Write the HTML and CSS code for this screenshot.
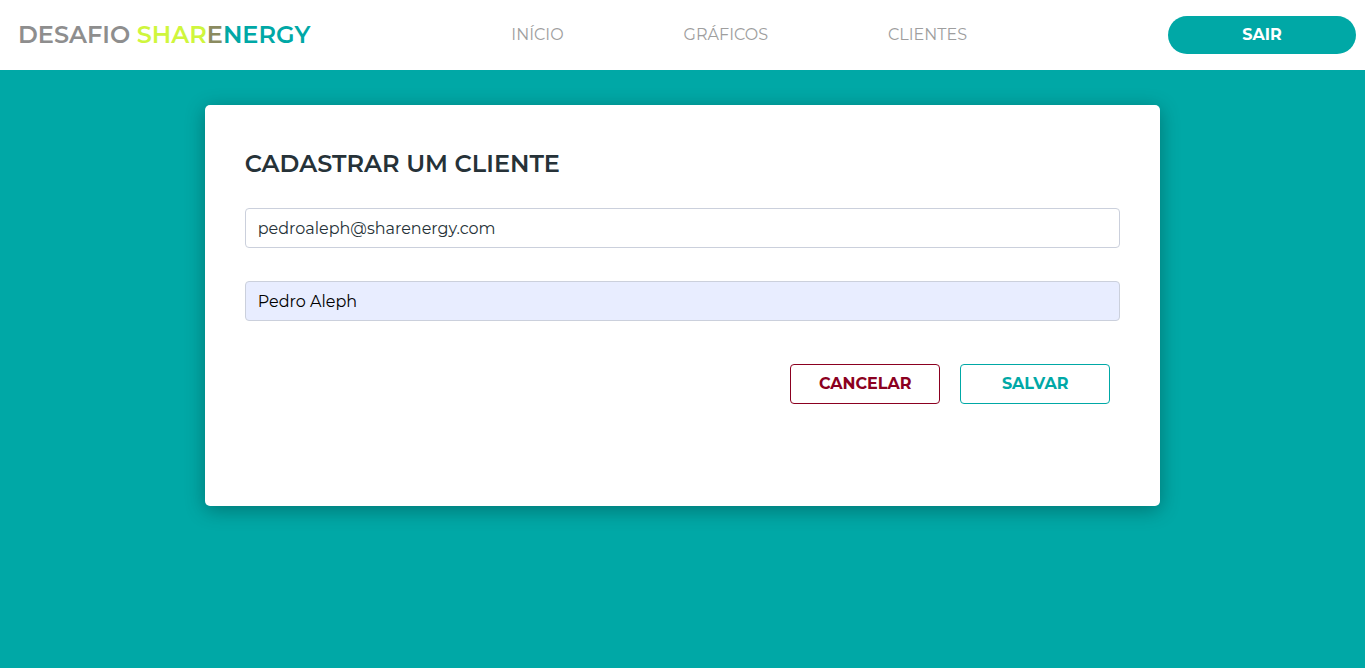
FILE: index.html
```html
<!DOCTYPE html>
<html lang="pt-BR">
<head>
  <meta charset="utf-8">
  <meta name="viewport" content="width=device-width, initial-scale=1">
  <title>Desafio Sharenergy</title>
  <link rel="stylesheet" href="styles.css">
</head>
<body>
  <header class="header">
    <a class="brand" href="#">DESAFIO <span class="brand-lime">SHAR</span><span class="brand-olive">E</span><span class="brand-teal">NERGY</span></a>
    <nav class="nav">
      <a class="nav-link" href="#">INÍCIO</a>
      <a class="nav-link" href="#">GRÁFICOS</a>
      <a class="nav-link" href="#">CLIENTES</a>
    </nav>
    <button class="logout" type="button">SAIR</button>
  </header>
  <main class="main">
    <form class="card">
      <h1 class="title">CADASTRAR UM CLIENTE</h1>
      <input class="field" type="email" aria-label="E-mail" value="pedroaleph@sharenergy.com">
      <input class="field field-filled" type="text" aria-label="Nome" value="Pedro Aleph">
      <div class="actions">
        <button class="button button-cancel" type="button">CANCELAR</button>
        <button class="button button-save" type="submit">SALVAR</button>
      </div>
    </form>
  </main>
</body>
</html>
```
FILE: styles.css
```css
* {
  box-sizing: border-box;
}

body {
  display: flex;
  flex-direction: column;
  min-height: 100vh;
  margin: 0;
  background: #00a8a6;
  color: #263238;
  font-family: Montserrat, Inter, "Open Sans", sans-serif;
  font-size: 16px;
  line-height: 24px;
}

.header {
  display: flex;
  align-items: center;
  justify-content: space-between;
  min-height: 70px;
  padding: 0 9px 0 18px;
  background: #fff;
}

.brand {
  color: #8e8e8e;
  font-size: 24px;
  font-weight: 600;
  text-decoration: none;
  white-space: nowrap;
}

.brand-lime {
  color: #cff63d;
}

.brand-olive {
  color: #8b8b60;
}

.brand-teal {
  color: #00a8a6;
}

.nav {
  display: flex;
}

.nav-link {
  padding: 0 60px;
  color: #9e9e9e;
  font-weight: 400;
  text-decoration: none;
}

.logout {
  width: 188px;
  height: 38px;
  padding: 0;
  border: 0;
  border-radius: 20px;
  background: #00a8a6;
  color: #fff;
  font: inherit;
  font-weight: 700;
}

.main {
  display: flex;
  justify-content: center;
  padding: 35px 0;
}

.card {
  width: 70%;
  min-height: 60vh;
  padding: 40px;
  border-radius: 5px;
  background: #fff;
  box-shadow: 0 4px 20px rgba(0, 0, 0, 0.3);
}

.title {
  margin: 0 0 25px;
  font-size: 24px;
  font-weight: 600;
  line-height: 38px;
}

.field {
  display: block;
  width: 100%;
  height: 40px;
  margin-bottom: 33px;
  padding: 0 12px;
  border: 1px solid #cbd0dc;
  border-radius: 4px;
  background: #fff;
  color: #263238;
  font: inherit;
}

.field-filled {
  background: #e8edff;
  color: #000;
}

.actions {
  display: flex;
  justify-content: flex-end;
  gap: 20px;
  padding: 10px 10px 0;
}

.button {
  width: 150px;
  height: 40px;
  padding: 0;
  border: 1px solid;
  border-radius: 4px;
  background: #fff;
  font: inherit;
  font-weight: 700;
}

.button-cancel {
  color: #8b0020;
}

.button-save {
  color: #00a8a6;
}
```
